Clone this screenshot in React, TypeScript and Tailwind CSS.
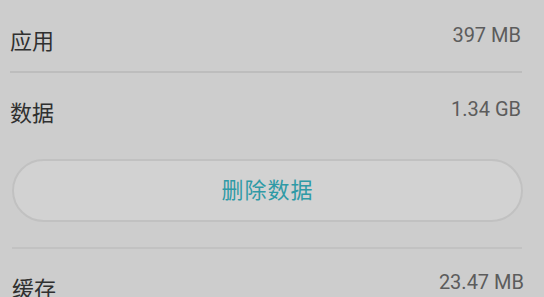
export default function App() {
  const rows = [
    { label: '应用', value: '397 MB' },
    { label: '数据', value: '1.34 GB' },
  ]

  return (
    <div
      className="w-[544px] h-[297px] overflow-hidden bg-[#cdcdcd] text-[#333]"
      style={{ fontFamily: 'Roboto, "Noto Sans CJK SC", sans-serif' }}
    >
      {/* 应用 */}
      <div className="h-[71px] flex justify-between pl-[10px] pr-[23px]">
        <span className="mt-[31px] text-[22px] leading-[22px] text-[#303030]">{rows[0].label}</span>
        <span className="mt-[25px] text-[20px] leading-[20px] text-[#5c5c5c]">{rows[0].value}</span>
      </div>
      <div className="h-[2px] ml-[10px] mr-[22px] bg-[#bdbdbd]" />

      {/* 数据 */}
      <div className="h-[86px] flex justify-between pl-[10px] pr-[23px]">
        <span className="mt-[30px] text-[22px] leading-[22px] text-[#303030]">{rows[1].label}</span>
        <span className="mt-[26px] text-[20px] leading-[20px] text-[#5c5c5c]">{rows[1].value}</span>
      </div>

      {/* 删除数据 button */}
      <div className="pl-[12px] pr-[21px]">
        <button className="w-full h-[63px] rounded-full border-2 border-[#c1c1c1] bg-[#d2d2d2] text-[22px] leading-[22px] text-[#2f9aa6] tracking-[1px]">
          删除数据
        </button>
      </div>

      <div className="h-[2px] mt-[25px] ml-[12px] mr-[22px] bg-[#c2c2c2]" />

      {/* 缓存 */}
      <div className="flex justify-between pl-[12px] pr-[20px]">
        <span className="mt-[30px] text-[22px] leading-[22px] text-[#303030]">缓存</span>
        <span className="mt-[23px] text-[20px] leading-[20px] text-[#5c5c5c]">23.47 MB</span>
      </div>
    </div>
  )
}
